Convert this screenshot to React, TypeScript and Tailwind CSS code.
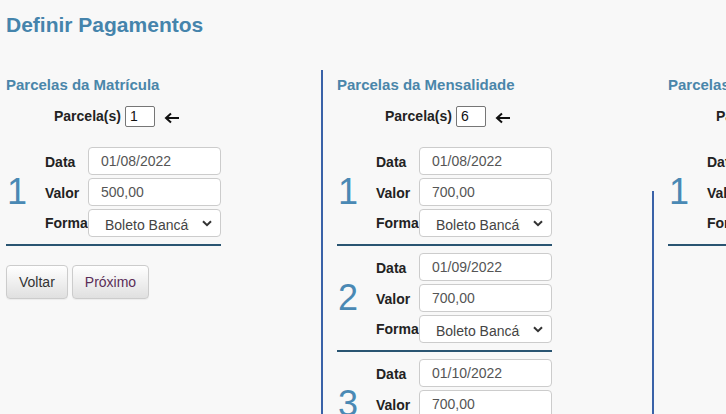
import { ReactNode } from "react";

type Parcela = { num: number; data: string; valor: string };

const Arrow = () => (
  <svg width="16" height="12" viewBox="0 0 16 12" className="ml-[9px] mt-[2px]">
    <path d="M15 6H2.5M7 1.5L2 6l5 4.5" fill="none" stroke="#111" strokeWidth="2" />
  </svg>
);

const Chevron = () => (
  <svg width="10" height="7" viewBox="0 0 10 7">
    <path d="M1 1.2l4 4 4-4" fill="none" stroke="#333" strokeWidth="2" />
  </svg>
);

const Campo = ({ children }: { children: ReactNode }) => (
  <div className="h-[28px] w-[133px] flex items-center pl-[12px] bg-white border border-[#ccc] rounded-[4px] text-[14px] text-[#555] overflow-hidden">
    {children}
  </div>
);

const Linha = ({ p }: { p: Parcela }) => (
  <div className="flex w-[215px] items-center pb-[7px] mb-[7px] border-b-2 border-[#2a5572]">
    <div className="w-[39px] pl-[1px] text-[36px] leading-none text-[#4a89b4] font-light">{p.num}</div>
    <div className="flex flex-col gap-[3px]">
      <div className="flex items-center">
        <span className="w-[43px] pt-[3px] text-[14px] font-bold text-[#222]">Data</span>
        <Campo>{p.data}</Campo>
      </div>
      <div className="flex items-center">
        <span className="w-[43px] pt-[3px] text-[14px] font-bold text-[#222]">Valor</span>
        <Campo>{p.valor}</Campo>
      </div>
      <div className="flex items-center">
        <span className="w-[43px] text-[14px] font-bold text-[#222] whitespace-nowrap">Forma</span>
        <div className="h-[28px] w-[133px] flex items-center justify-between pl-[16px] pr-[8px] bg-white border border-[#ccc] rounded-[4px] text-[14px] text-[#444]">
          <span className="w-[84px] pt-[4px] overflow-hidden whitespace-nowrap">Boleto Bancário</span>
          <Chevron />
        </div>
      </div>
    </div>
  </div>
);

const Coluna = ({ titulo, qtd, parcelas, children }: { titulo: string; qtd: string; parcelas: Parcela[]; children?: ReactNode }) => (
  <div className="pt-[5px]">
    <h2 className="text-[15px] leading-[20px] font-bold text-[#4a86aa] whitespace-nowrap">{titulo}</h2>
    <div className="flex items-center h-[21px] mt-[11px] pl-[48px]">
      <span className="text-[14px] font-bold text-[#222] mr-[4px]">Parcela(s)</span>
      <div className="w-[30px] h-[21px] border border-[#767676] bg-white rounded-[2px] pl-[4px] text-[14px] leading-[19px] text-[#111]">{qtd}</div>
      <Arrow />
    </div>
    <div className="mt-[20px]">
      {parcelas.map((p) => (
        <Linha key={p.num} p={p} />
      ))}
    </div>
    {children}
  </div>
);

export default function App() {
  const matricula = [{ num: 1, data: "01/08/2022", valor: "500,00" }];
  const mensalidade = [
    { num: 1, data: "01/08/2022", valor: "700,00" },
    { num: 2, data: "01/09/2022", valor: "700,00" },
    { num: 3, data: "01/10/2022", valor: "700,00" },
    { num: 4, data: "01/11/2022", valor: "700,00" },
  ];
  const terceira = [{ num: 1, data: "01/08/2022", valor: "0,00" }];

  return (
    <div className="w-full h-[414px] overflow-hidden bg-[#f8f8f8] font-['Liberation_Sans',Arial,sans-serif]">
      <h1 className="pt-[13px] pl-[6px] text-[21px] leading-[24px] font-bold text-[#4584ac]">Definir Pagamentos</h1>
      <div className="flex mt-[33px]">
        <div className="w-[321px] shrink-0 pl-[6px]">
          <Coluna titulo="Parcelas da Matrícula" qtd="1" parcelas={matricula}>
            <div className="flex gap-[4px] mt-[19px]">
              <button className="h-[34px] px-[12px] text-[14px] text-[#333] border border-[#ccc] rounded-[4px] bg-gradient-to-b from-white to-[#e0e0e0] shadow-[0_1px_1px_rgba(0,0,0,0.05)]">Voltar</button>
              <button className="h-[34px] px-[12px] text-[14px] text-[#5a2d57] border border-[#ccc] rounded-[4px] bg-gradient-to-b from-white to-[#e0e0e0] shadow-[0_1px_1px_rgba(0,0,0,0.05)]">Próximo</button>
            </div>
          </Coluna>
        </div>
        <div className="w-[331px] shrink-0 border-l-2 border-[#3a62a8] pl-[14px] h-[400px]">
          <Coluna titulo="Parcelas da Mensalidade" qtd="6" parcelas={mensalidade} />
        </div>
        <div className="flex shrink-0">
          <div className="mt-[121px] h-[300px] border-l-2 border-[#3a62a8]" />
          <div className="pl-[14px]">
            <Coluna titulo="Parcelas do Material" qtd="1" parcelas={terceira} />
          </div>
        </div>
      </div>
    </div>
  );
}
